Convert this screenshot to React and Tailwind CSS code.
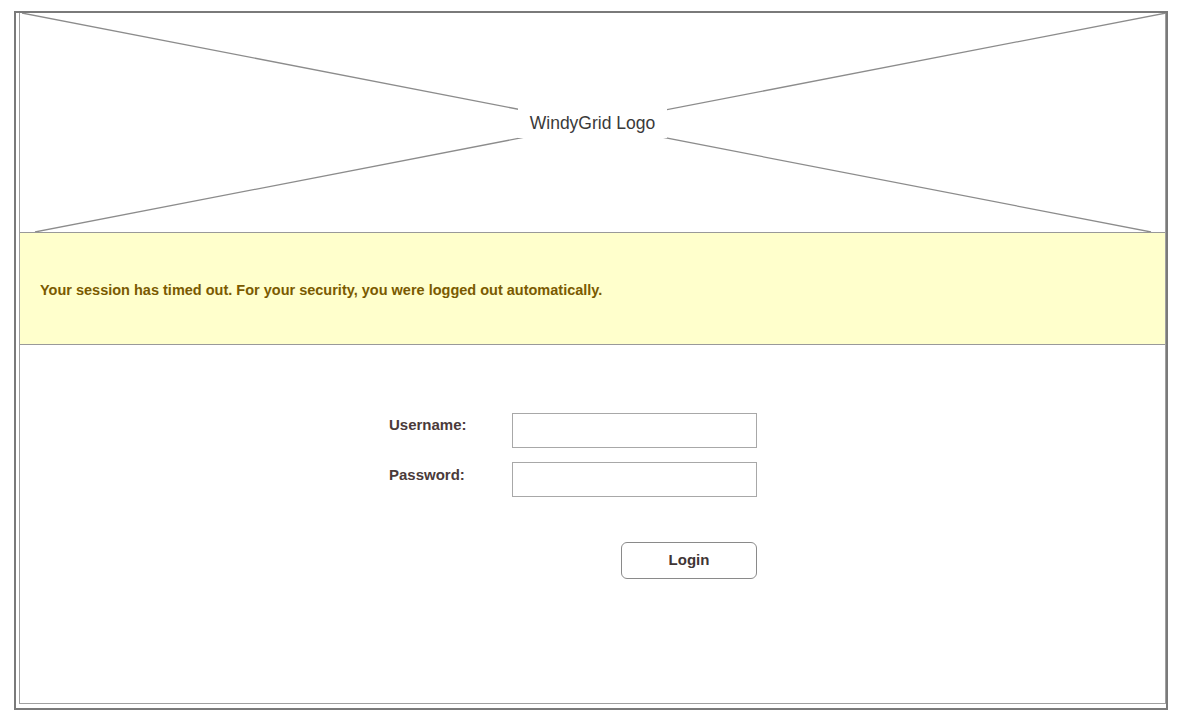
export default function App() {
  return (
    <div className="min-h-[717px] w-[1177px] bg-white pt-[11px] pl-[14px]" style={{ fontFamily: '"Liberation Sans", Arial, sans-serif' }}>
      <div className="h-[699px] w-[1154px] border-2 border-[#7a7a7a]">
        <div className="ml-[3px] flex h-[691px] w-[1147px] flex-col border-b border-l border-r border-[#a0a0a0]">
          {/* Logo placeholder */}
          <div className="relative flex h-[219px] items-center justify-center">
            <svg className="absolute inset-0" width="1146" height="219" viewBox="0 0 1146 219">
              <line x1="2" y1="0" x2="1131" y2="219" stroke="#8c8c8c" strokeWidth="1.3" />
              <line x1="1146" y1="0" x2="15" y2="219" stroke="#8c8c8c" strokeWidth="1.3" />
            </svg>
            <span className="relative bg-white px-[12px] py-[4px] text-[17.5px] leading-[22px] text-[#3a3a3a]">WindyGrid Logo</span>
          </div>
          {/* Banner */}
          <div className="flex h-[113px] items-center border-y border-[#999999] bg-[#ffffcc] pl-[20px]">
            <span className="mt-[4px] text-[14.5px] font-bold text-[#7a5a00]">
              Your session has timed out. For your security, you were logged out automatically.
            </span>
          </div>
          {/* Form */}
          <div className="ml-[369px] mt-[68px] flex w-[368px] flex-col">
            <div className="flex items-start">
              <label className="mt-[1px] w-[123px] text-[15px] font-bold text-[#4a3a3a]">Username:</label>
              <input className="h-[35px] w-[245px] border border-[#a8a8a8] bg-white outline-none" />
            </div>
            <div className="mt-[14px] flex items-start">
              <label className="mt-[2px] w-[123px] text-[15px] font-bold text-[#4a3a3a]">Password:</label>
              <input type="password" className="h-[35px] w-[245px] border border-[#a8a8a8] bg-white outline-none" />
            </div>
            <div className="mt-[45px] flex justify-end">
              <button className="h-[37px] w-[136px] rounded-[6px] border border-[#8a8a8a] bg-white text-[15px] font-bold text-[#3f3535]">
                Login
              </button>
            </div>
          </div>
        </div>
      </div>
    </div>
  );
}
